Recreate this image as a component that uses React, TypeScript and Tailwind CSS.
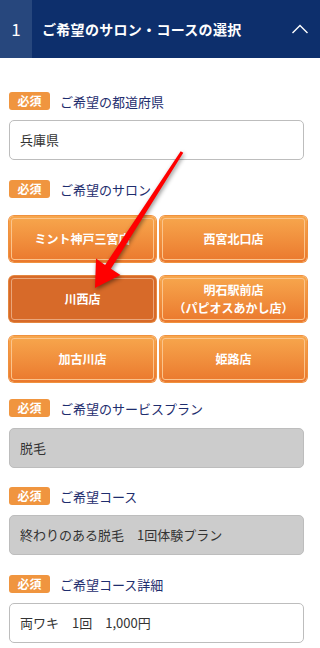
import React from "react";

const font = { fontFamily: '"Noto Sans CJK JP", "Noto Sans", sans-serif' };

function Label({ text }: { text: string }) {
  return (
    <div className="flex items-center h-[18px]">
      <span className="w-[41px] h-[18px] rounded-[3px] bg-[#f0953f] text-white text-[12px] font-bold flex items-center justify-center leading-none">
        必須
      </span>
      <span className="ml-[10px] text-[13px] text-[#1e2d6e] leading-none">{text}</span>
    </div>
  );
}

function Field({ text, gray }: { text: string; gray?: boolean }) {
  return (
    <div
      className={
        "w-[295px] h-[40px] rounded-[5px] border border-[#bdbdbd] flex items-center pl-[10px] text-[13px] text-[#333] " +
        (gray ? "bg-[#cccccc]" : "bg-white")
      }
    >
      {text}
    </div>
  );
}

function SalonButton({ lines, selected }: { lines: string[]; selected?: boolean }) {
  return (
    <div
      className={
        "h-[46px] p-[2px] rounded-[5px] " +
        (selected
          ? "bg-[#d76a29] shadow-[0_0_0_1px_#e4863f]"
          : "bg-gradient-to-b from-[#f7a74d] to-[#ea782d] shadow-[0_0_0_1px_#f0913e]")
      }
    >
      <div
        className={
          "h-full rounded-[3px] border flex flex-col items-center justify-center text-white text-[12px] font-bold leading-[18px] " +
          (selected ? "border-[#eaa67a]" : "border-[#fbc48c]")
        }
      >
        {lines.map((l) => (
          <span key={l}>{l}</span>
        ))}
      </div>
    </div>
  );
}

export default function App() {
  return (
    <div className="relative w-[320px] h-[648px] bg-white overflow-hidden" style={font}>
      <div className="flex h-[58px] bg-[#0d2f6c]">
        <div className="w-[32px] bg-[#27477d] flex items-center justify-center text-white text-[17px]">1</div>
        <div className="flex-1 flex items-center pl-[10px] text-white text-[14px] font-bold tracking-[0.3px]">
          ご希望のサロン・コースの選択
        </div>
        <div className="w-[40px] flex items-center justify-center">
          <svg width="18" height="12" viewBox="0 0 18 12">
            <polyline points="1.5,10 9,2.5 16.5,10" fill="none" stroke="white" strokeWidth="1.4" />
          </svg>
        </div>
      </div>

      <div className="pl-[9px] pt-[34px]">
        <Label text="ご希望の都道府県" />
        <div className="mt-[10px]">
          <Field text="兵庫県" />
        </div>

        <div className="mt-[20px]">
          <Label text="ご希望のサロン" />
        </div>
        <div className="mt-[18px] w-[298px] grid grid-cols-2 gap-x-[4px] gap-y-[14px]">
          <SalonButton lines={["ミント神戸三宮店"]} />
          <SalonButton lines={["西宮北口店"]} />
          <SalonButton lines={["川西店"]} selected />
          <SalonButton lines={["明石駅前店", "（パピオスあかし店）"]} />
          <SalonButton lines={["加古川店"]} />
          <SalonButton lines={["姫路店"]} />
        </div>

        <div className="mt-[17px]">
          <Label text="ご希望のサービスプラン" />
        </div>
        <div className="mt-[11px]">
          <Field text="脱毛" gray />
        </div>

        <div className="mt-[19px]">
          <Label text="ご希望コース" />
        </div>
        <div className="mt-[10px]">
          <Field text="終わりのある脱毛　1回体験プラン" gray />
        </div>

        <div className="mt-[20px]">
          <Label text="ご希望コース詳細" />
        </div>
        <div className="mt-[10px]">
          <Field text="両ワキ　1回　1,000円" />
        </div>
      </div>

      <svg
        className="absolute left-0 top-0 pointer-events-none drop-shadow-[1px_2px_2px_rgba(0,0,0,0.45)]"
        width="320"
        height="648"
        viewBox="0 0 320 648"
      >
        <polygon
          points="183.3,152.8 110.9,268.7 120.5,275 95,288 96,258.5 105.1,264.9 180.7,151.2"
          fill="#ff0000"
        />
      </svg>
    </div>
  );
}
